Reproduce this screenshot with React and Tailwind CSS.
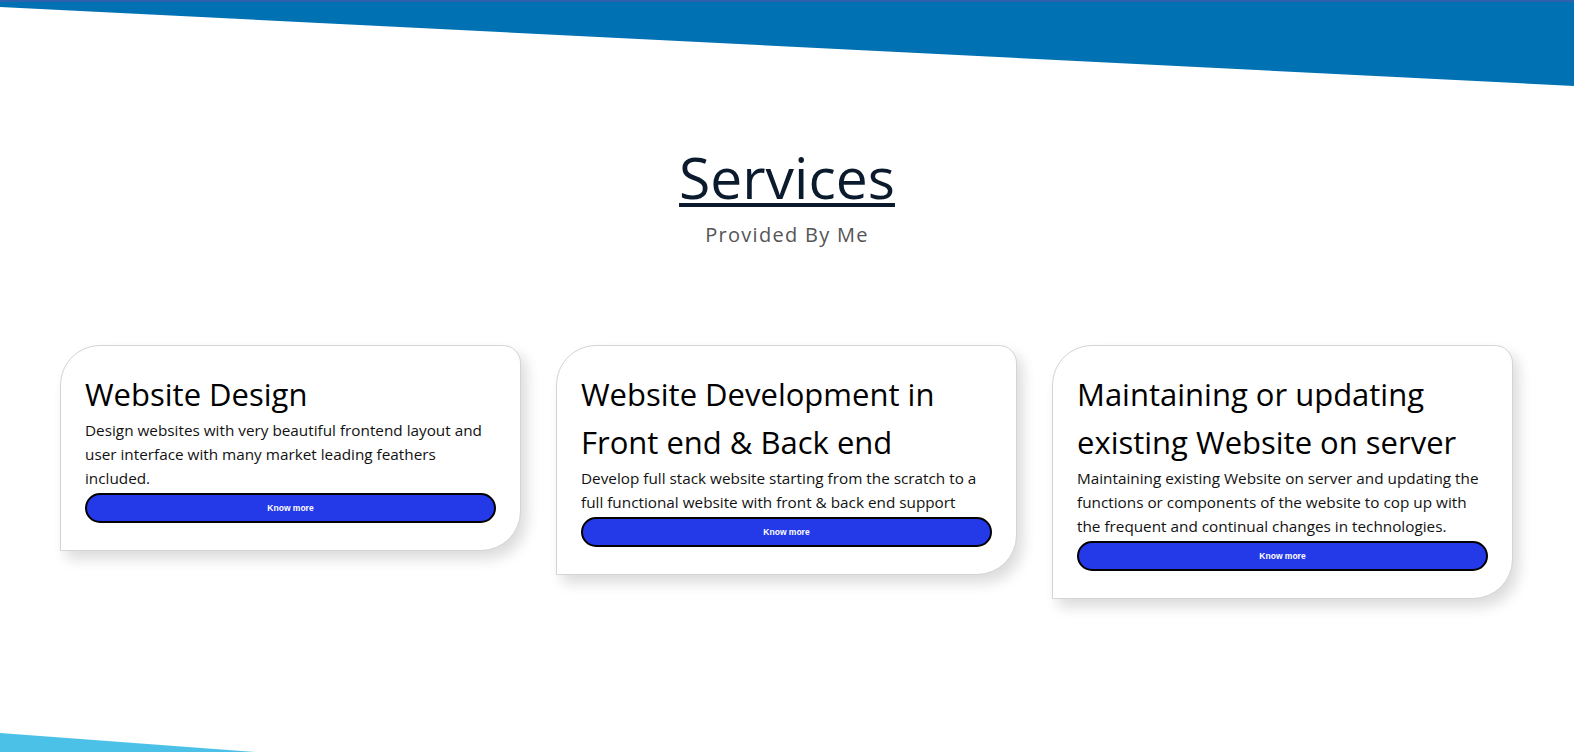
const services = [
  {
    title: 'Website Design',
    text: 'Design websites with very beautiful frontend layout and user interface with many market leading feathers included.',
  },
  {
    title: 'Website Development in Front end & Back end',
    text: 'Develop full stack website starting from the scratch to a full functional website with front & back end support',
  },
  {
    title: 'Maintaining or updating existing Website on server',
    text: 'Maintaining existing Website on server and updating the functions or components of the website to cop up with the frequent and continual changes in technologies.',
  },
]

function ServiceCard({ title, text }) {
  return (
    <div className="w-[461px] shrink-0 bg-white border border-[#d4d4d4] rounded-tl-[40px] rounded-tr-[18px] rounded-br-[40px] rounded-bl-none px-6 pt-6 pb-[27px] shadow-[6px_8px_14px_rgba(0,0,0,0.14)]">
      <h3 className="text-[31px] leading-[48px] text-black">{title}</h3>
      <p className="text-[15.3px] leading-6 text-[#111]">{text}</p>
      <button className="mt-[3px] w-full h-[30px] rounded-full bg-[#2439e8] border-2 border-black text-white text-[8.5px] font-bold font-['Liberation_Sans',Arial,sans-serif]">
        Know more
      </button>
    </div>
  )
}

export default function App() {
  return (
    <div className="relative flex flex-col h-[752px] overflow-hidden bg-white font-['Open_Sans',sans-serif]">
      <div className="h-[86px] bg-[#0071b2] border-t-2 border-[#2f62ad] [clip-path:polygon(0_0,100%_0,100%_100%,0_8%)]" />

      <div className="flex flex-col items-center mt-[55px]">
        <h1 className="text-[57px] leading-[72px] text-[#0b1a2c] underline decoration-[4px] underline-offset-[4px]">
          Services
        </h1>
        <p className="mt-[8px] text-xl leading-7 tracking-[1.3px] text-[#555]">Provided By Me</p>
      </div>

      <div className="flex items-start gap-[35px] pl-[60px] mt-[96px]">
        {services.map((s) => (
          <ServiceCard key={s.title} title={s.title} text={s.text} />
        ))}
      </div>

      <div className="mt-auto w-[255px] h-[19px] bg-[#4cc1e8] [clip-path:polygon(0_0,100%_100%,0_100%)]" />
    </div>
  )
}
